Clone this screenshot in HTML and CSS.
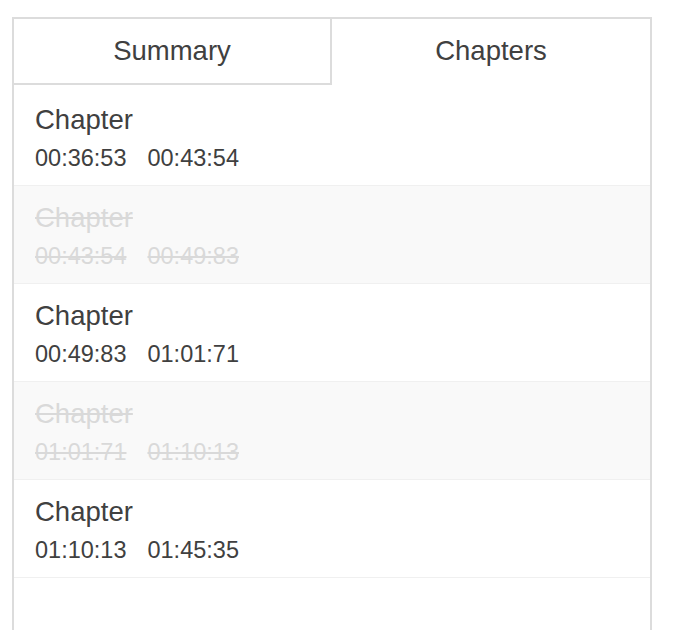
FILE: index.html
```html
<!DOCTYPE html>
<html>
<head>
<meta charset="utf-8">
<link rel="stylesheet" href="styles.css">
</head>
<body>
<div class="panel">
  <div class="tabs">
    <div class="tab">Summary</div>
    <div class="tab tab-active">Chapters</div>
  </div>
  <ul class="chapters">
    <li class="chapter">
      <div class="chapter-title">Chapter</div>
      <div class="chapter-times"><span class="time">00:36:53</span><span class="time">00:43:54</span></div>
    </li>
    <li class="chapter chapter-skipped">
      <div class="chapter-title">Chapter</div>
      <div class="chapter-times"><span class="time">00:43:54</span><span class="time">00:49:83</span></div>
    </li>
    <li class="chapter">
      <div class="chapter-title">Chapter</div>
      <div class="chapter-times"><span class="time">00:49:83</span><span class="time">01:01:71</span></div>
    </li>
    <li class="chapter chapter-skipped">
      <div class="chapter-title">Chapter</div>
      <div class="chapter-times"><span class="time">01:01:71</span><span class="time">01:10:13</span></div>
    </li>
    <li class="chapter">
      <div class="chapter-title">Chapter</div>
      <div class="chapter-times"><span class="time">01:10:13</span><span class="time">01:45:35</span></div>
    </li>
  </ul>
</div>
</body>
</html>
```
FILE: styles.css
```css
html, body {
  margin: 0;
  padding: 0;
  background: #fff;
}

body {
  padding: 17px 0 0 12px;
  font-family: "Liberation Sans", Arial, sans-serif;
  color: #404040;
}

.panel {
  width: 636px;
  min-height: 640px;
  border: 2px solid #dcdcdc;
  border-bottom: none;
  background: #fff;
}

.tabs {
  display: grid;
  grid-template-columns: 1fr 1fr;
}

.tab {
  height: 64px;
  line-height: 64px;
  text-align: center;
  font-size: 27.5px;
  color: #404040;
  border-bottom: 2px solid #dcdcdc;
}

.tab:first-child {
  border-right: 2px solid #dcdcdc;
}

.tab-active {
  border-bottom-color: transparent;
}

.chapters {
  list-style: none;
  margin: 3px 0 0;
  padding: 0;
}

.chapter {
  padding: 16px 21px 12px;
  border-bottom: 1px solid #f0f0f0;
}

.chapter-skipped {
  background: #f9f9f9;
  color: #d9d9d9;
  text-decoration: line-through;
}

.chapter-title {
  font-size: 27.5px;
  line-height: 32px;
}

.chapter-times {
  margin-top: 7px;
  font-size: 23.5px;
  line-height: 30px;
}

.time + .time {
  margin-left: 21px;
}
```
